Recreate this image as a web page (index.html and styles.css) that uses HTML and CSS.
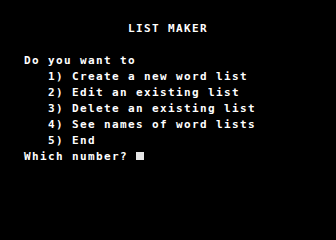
FILE: index.html
```html
<!doctype html>
<html lang="en">
<head>
<meta charset="utf-8" />
<title>List Maker</title>
<link rel="stylesheet" href="styles.css">
</head>
<body>

<div id="screen">
<div class="line title">             LIST MAKER</div>
<div class="line">Do you want to</div>
<div class="line">   1) Create a new word list</div>
<div class="line">   2) Edit an existing list</div>
<div class="line">   3) Delete an existing list</div>
<div class="line">   4) See names of word lists</div>
<div class="line">   5) End</div>
<div class="line">Which number? <span class="cursor"></span></div>
</div>

</body>
</html>
```

FILE: styles.css
```css
html{margin:0;padding:0;background:#000}
body{margin:0;padding:0;background:#000;width:336px;height:240px;overflow:hidden}

#screen{padding:24px 0 0 24px;color:#fff;font-family:"DejaVu Sans Mono",monospace;font-weight:bold;font-size:11px;letter-spacing:1.38px}

.line{height:8px;line-height:10px;margin-bottom:8px;white-space:pre}
.title{margin-bottom:24px}

.cursor{display:inline-block;width:8px;height:8px;background:#e6e6e6;vertical-align:top}
```
